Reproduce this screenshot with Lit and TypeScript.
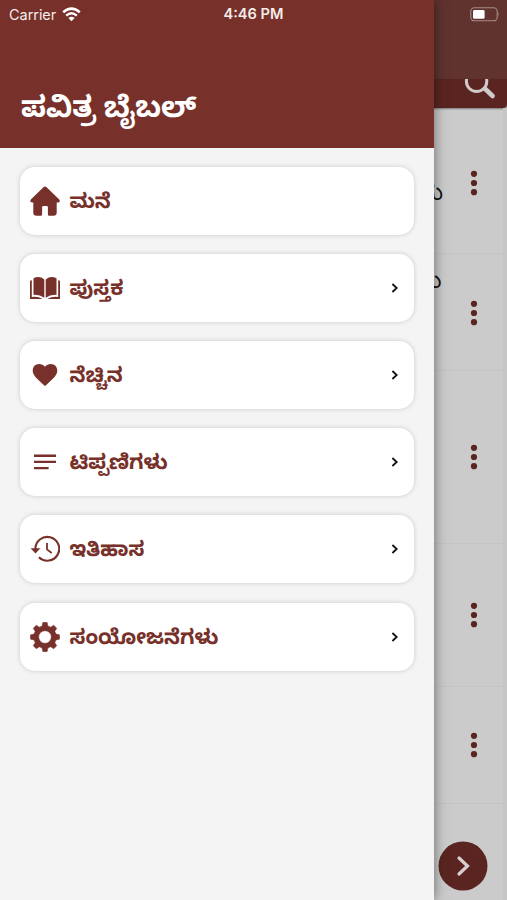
import { LitElement, html, css, svg } from "lit";
import { customElement, property } from "lit/decorators.js";

const icons: Record<string, unknown> = {
  home: svg`<path d="M14.9 .4 Q15.6 .4 16.3 1 L29 13.2 Q30.3 14.6 29.4 15.9 Q28.8 16.5 27.4 16.5 H26.7 V26.5 Q26.7 29.7 23.5 29.7 H19.2 Q17.9 29.7 17.9 28.4 V21.3 Q17.9 20 16.6 20 H13.4 Q12.1 20 12.1 21.3 V28.4 Q12.1 29.7 10.8 29.7 H6.5 Q3.3 29.7 3.3 26.5 V16.5 H2.2 Q.8 16.5 .4 15.6 Q0 14.5 1.1 13.2 L13.7 1 Q14.3 .4 14.9 .4Z"/>`,
  book: svg`<path d="M3.5 5.2 Q9.5 2.2 14.3 6.4 V24.8 Q9.6 21.4 3.5 21.9Z M15.7 6.4 Q20.5 2.2 26.5 5.2 V21.9 Q20.4 21.4 15.7 24.8Z"/><path d="M0 7.8 L1.8 7.2 V24 Q8 23.2 12.6 26 H0Z M30 7.8 L28.2 7.2 V24 Q22 23.2 17.4 26 H30Z"/>`,
  heart: svg`<path d="M15 26 L13.2 24.4 C6.5 18.6 2.7 15.1 2.7 10.6 C2.7 6.8 5.5 4 9.2 4 C11.4 4 13.6 5 15 6.8 C16.4 5 18.6 4 20.8 4 C24.5 4 27.3 6.8 27.3 10.6 C27.3 15.1 23.5 18.6 16.8 24.4Z"/>`,
  notes: svg`<path d="M4 7.6H26V9.9H4Z M4 13.8H26V16.1H4Z M4 20H18.6V22.3H4Z"/>`,
  history: svg`<path d="M5.4 15 A11.9 11.9 0 1 1 8.9 23.2" fill="none" stroke="currentColor" stroke-width="2.1"/><path d="M.6 14.2H10.4L5.5 19.4Z"/><path d="M17 9V15.4L21.7 19" fill="none" stroke="currentColor" stroke-width="1.8"/>`,
  gear: svg`<path fill-rule="evenodd" d="M12.8 .6 Q15 .1 17.2 .6 L17.9 4 L20.7 5.2 L23.6 3.3 Q25.5 4.5 26.7 6.4 L24.8 9.3 L26 12.1 L29.4 12.8 Q29.9 15 29.4 17.2 L26 17.9 L24.8 20.7 L26.7 23.6 Q25.5 25.5 23.6 26.7 L20.7 24.8 L17.9 26 L17.2 29.4 Q15 29.9 12.8 29.4 L12.1 26 L9.3 24.8 L6.4 26.7 Q4.5 25.5 3.3 23.6 L5.2 20.7 L4 17.9 L.6 17.2 Q.1 15 .6 12.8 L4 12.1 L5.2 9.3 L3.3 6.4 Q4.5 4.5 6.4 3.3 L9.3 5.2 L12.1 4Z M15 8.7 a6.3 6.3 0 1 0 0 12.6 a6.3 6.3 0 1 0 0 -12.6Z" stroke="currentColor" stroke-width=".5" stroke-linejoin="round"/>`,
};

@customElement("menu-card")
class MenuCard extends LitElement {
  @property() icon = "home";
  @property() label = "";
  @property({ type: Boolean }) arrow = false;
  static styles = css`
    :host { display: flex; align-items: center; height: 68px; box-sizing: border-box; padding: 0 13px 0 10px;
      border-radius: 15px; background: #fff; color: #77312a; box-shadow: 0 0 5px rgba(0, 0, 0, 0.17); }
    .icon { width: 30px; height: 30px; fill: currentColor; flex: none; }
    .label { flex: 1; margin: 0 0 2px 9.5px; font-size: 20.7px; font-weight: 700; line-height: 30px; white-space: nowrap; }
    .chevron { width: 12px; height: 12px; fill: none; stroke: #111; stroke-width: 1.8; }
  `;
  render() {
    return html`<svg class="icon" viewBox="0 0 30 30">${icons[this.icon]}</svg>
      <span class="label">${this.label}</span>
      ${this.arrow ? html`<svg class="chevron" viewBox="0 0 12 12"><path d="M3.4 2 L7.7 6 L3.4 10"/></svg>` : ""}`;
  }
}

@customElement("app-root")
class AppRoot extends LitElement {
  static styles = css`
    :host { display: block; position: relative; width: 507px; height: 900px; overflow: hidden; background: #cbcbcb;
      font-family: "Noto Sans", "Noto Sans Kannada", "Open Sans", sans-serif; }
    .page { display: flex; flex-direction: column; height: 900px; }
    .top { height: 79px; background: #60332f; }
    .bar { height: 29px; background: #5a2520; border-radius: 0 0 4px 0; display: flex; justify-content: flex-end;
      box-shadow: 0 1px 2px rgba(0, 0, 0, 0.4); }
    .search { width: 34px; height: 22px; margin-right: 9px; fill: none; stroke: #d0cac8; }
    .list { width: 503px; border-right: 4px solid #c6c6c6; flex: 1; }
    .row { box-sizing: border-box; display: flex; align-items: center; justify-content: flex-end; padding-right: 25px;
      border-bottom: 1px solid #c4c4c4; position: relative; }
    .row:first-child { padding-top: 6px; }
    .row:nth-child(2) { padding-top: 2px; }
    .dots { width: 8px; height: 26px; fill: #5a2520; }
    .glyph { position: absolute; right: 60px; font-size: 22px; line-height: 30px; color: #111; }
    .row:nth-child(2) .glyph { right: 61.5px; }
    .drawer { position: absolute; inset: 0 auto 0 0; width: 434px; background: #f4f4f4; box-shadow: 0 0 12px rgba(0, 0, 0, 0.5); }
    .head { height: 147.5px; box-sizing: border-box; background: #77312a; padding: 86px 0 0 21px; color: #fff; }
    .title { font-size: 29.1px; font-weight: 700; line-height: 40px; white-space: nowrap; }
    .menu { display: flex; flex-direction: column; gap: 19.2px; padding: 19.2px 20px; }
    .status { position: absolute; inset: 0 0 auto 0; height: 27px; display: grid; grid-template-columns: 1fr auto 1fr;
      align-items: center; padding: 0 7px 0 9px; color: #f5ecea; font: 14.5px/27px Inter, sans-serif; }
    .carrier { display: flex; align-items: center; gap: 6px; letter-spacing: -0.05px; }
    .wifi { width: 19px; height: 15px; }
    .time { font-weight: 600; font-size: 14.6px; margin: 1px 0 0 -2px; }
    .battery { width: 30px; height: 15px; justify-self: end; }
    .next { position: absolute; left: 438px; top: 841px; width: 50px; height: 50px; }
  `;
  render() {
    const rows = [
      { h: 145.5, g: "ಸು", y: 68 },
      { h: 117, g: "ು", y: 10.5 },
      { h: 173, g: "", y: 0 },
      { h: 143.5, g: "", y: 0 },
      { h: 117, g: "", y: 0 },
    ];
    const items = [
      ["home", "ಮನೆ"],
      ["book", "ಪುಸ್ತಕ"],
      ["heart", "ನೆಚ್ಚಿನ"],
      ["notes", "ಟಿಪ್ಪಣಿಗಳು"],
      ["history", "ಇತಿಹಾಸ"],
      ["gear", "ಸಂಯೋಜನೆಗಳು"],
    ];
    return html`
      <div class="page">
        <div class="top"></div>
        <div class="bar">
          <svg class="search" viewBox="0 0 34 22">
            <circle cx="12.6" cy="2.3" r="10.2" stroke-width="3"/>
            <path d="M21.3 10 L28.6 17" stroke-width="4.6" stroke-linecap="round"/>
          </svg>
        </div>
        <div class="list">
          ${rows.map((r) => html`<div class="row" style="height:${r.h}px">
            ${r.g ? html`<span class="glyph" style="top:${r.y}px">${r.g}</span>` : ""}
            <svg class="dots" viewBox="0 0 8 26"><circle cx="4" cy="3.8" r="3.1"/><circle cx="4" cy="13" r="3.1"/><circle cx="4" cy="22.2" r="3.1"/></svg>
          </div>`)}
        </div>
      </div>
      <svg class="next" viewBox="0 0 50 50"><circle cx="25" cy="25" r="24.5" fill="#5a2520"/><path d="M21 17 L29.5 25 L21 33" fill="none" stroke="#d8d0ce" stroke-width="3.2" stroke-linecap="round"/></svg>
      <div class="drawer">
        <div class="head"><div class="title">ಪವಿತ್ರ ಬೈಬಲ್</div></div>
        <div class="menu">
          ${items.map(([i, l], n) => html`<menu-card .icon=${i} .label=${l} .arrow=${n > 0}></menu-card>`)}
        </div>
      </div>
      <div class="status">
        <span class="carrier">Carrier
          <svg class="wifi" viewBox="0 0 19 15"><g fill="none" stroke="#fff" stroke-width="2.5"><path d="M1.2 5.2 Q9.5 -2 17.8 5.2"/><path d="M4.2 8.6 Q9.5 4 14.8 8.6"/></g><path d="M6.4 11 Q9.5 8.4 12.6 11 L9.5 14.2Z" fill="#fff"/></svg>
        </span>
        <span class="time">4:46 PM</span>
        <svg class="battery" viewBox="0 0 30 15"><rect x=".8" y=".8" width="26.4" height="13" rx="3.6" fill="none" stroke="#a58c89" stroke-width="1.1"/><rect x="3" y="3" width="11.6" height="8.8" rx="1.4" fill="#fff"/><path d="M28.4 5.2 Q30 7.3 28.4 9.4Z" fill="#a58c89"/></svg>
      </div>`;
  }
}
